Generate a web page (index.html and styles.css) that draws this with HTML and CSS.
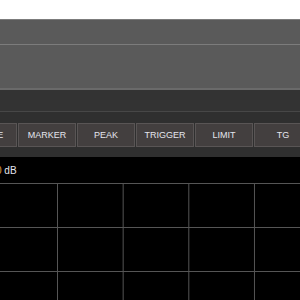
FILE: index.html
```html
<!DOCTYPE html>
<html lang="en">
<head>
    <meta charset="UTF-8">
    <title>Spectrum Analyzer</title>
    <link rel="stylesheet" href="styles.css">
</head>
<body>
    <div class="app">
        <!-- Title strip -->
        <div class="title-strip"></div>

        <!-- Upper panels -->
        <div class="panel panel-short"></div>
        <div class="panel panel-tall"></div>

        <!-- Status bar -->
        <div class="status-bar"></div>

        <!-- Menu buttons -->
        <div class="toolbar">
            <button class="menu-btn">TRACE</button>
            <button class="menu-btn">MARKER</button>
            <button class="menu-btn">PEAK</button>
            <button class="menu-btn">TRIGGER</button>
            <button class="menu-btn">LIMIT</button>
            <button class="menu-btn">TG</button>
        </div>

        <!-- Plot -->
        <div class="plot">
            <div class="plot-label"><span class="ref-value">0</span> dB</div>
            <div class="grid"></div>
        </div>
    </div>
</body>
</html>
```

FILE: styles.css
```css
/* General body styling */
body {
    margin: 0;
    width: 300px;
    height: 300px;
    overflow: hidden;
    background: #000;
    font-family: "Liberation Sans", Arial, sans-serif;
}

.app {
    display: flex;
    flex-direction: column;
    height: 300px;
}

/* Title strip */
.title-strip {
    height: 19px;
    background: #fff;
}

/* Upper panels */
.panel {
    background: #5a5a5a;
    border-top: 1px solid #7c7c7c;
}

.panel-short {
    height: 24px;
}

.panel-tall {
    height: 43px;
}

/* Status bar */
.status-bar {
    height: 21px;
    background: #333;
    border-top: 2px solid #6a6a6a;
    border-bottom: 1px solid #474747;
}

/* Menu buttons */
.toolbar {
    display: flex;
    gap: 1px;
    padding: 11px 0 10px;
    margin-left: -41px;
    background: #2f2f2f;
}

.menu-btn {
    flex: 0 0 58px;
    height: 24px;
    padding: 0;
    background: #433f3f;
    border: 1px solid #595555;
    color: #e4e6ee;
    font-family: "Liberation Sans", Arial, sans-serif;
    font-size: 9px;
}

/* Plot */
.plot {
    flex: 1;
    display: flex;
    flex-direction: column;
    background: #000;
}

.plot-label {
    height: 26px;
    margin-left: -4px;
    font-size: 10px;
    line-height: 28px;
    color: #e4e6ee;
}

.ref-value {
    color: #e0a040;
}

.grid {
    flex: 1;
    border-top: 1px solid #555;
    background:
        linear-gradient(to right, #555 1px, transparent 1px) 57px 0 / 65.67px 100%,
        linear-gradient(to bottom, transparent 43px, #555 43px) 0 0 / 100% 44px;
}
```
